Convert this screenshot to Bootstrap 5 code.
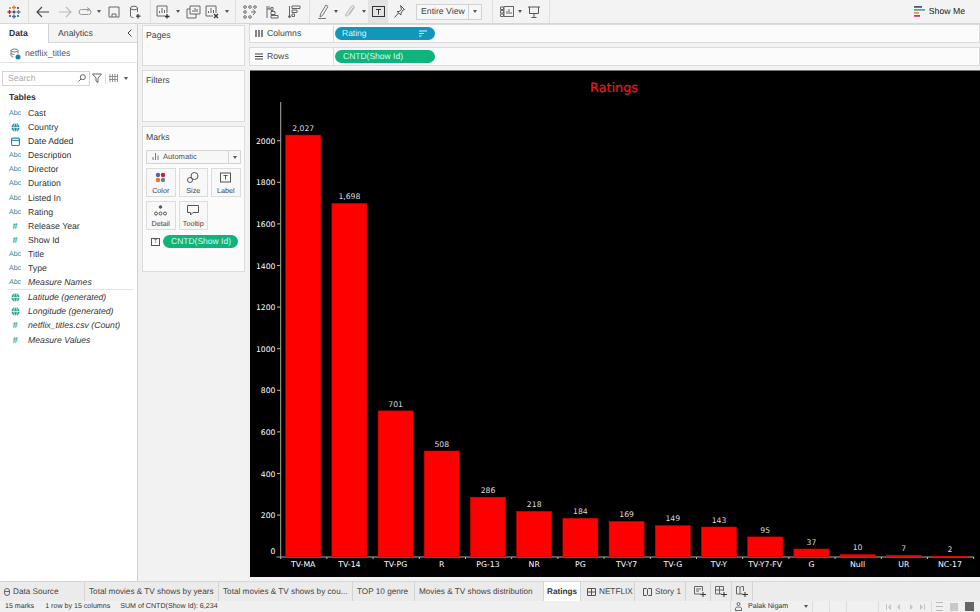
<!doctype html>
<html lang="en">
<head>
<meta charset="utf-8">
<title>Ratings</title>
<link rel="stylesheet" href="https://cdn.jsdelivr.net/npm/bootstrap@5.3.0/dist/css/bootstrap.min.css">
<style>
html,body{height:100%;margin:0;overflow:hidden}
body{font-family:"Liberation Sans",Arial,sans-serif;font-size:8.7px;color:#333;background:#f2f2f2;line-height:1.2;text-rendering:geometricPrecision}
svg{display:block}
.shell{width:980px;height:612px}
.tbar{height:24px;background:#f3f3f3;border-bottom:1px solid #d6d6d6;flex:none}
.tb{display:flex;align-items:center;justify-content:center;height:23px;flex:none}
.w4{width:4px}.w6{width:6px}.w10{width:10px}.w12{width:12px}.w18{width:18px}.w20{width:20px}.w22{width:22px}.w24{width:24px}.w28{width:28px}
.sep{width:1px;height:23px;background:#e0e0e0;flex:none}
.ml1px{margin-left:1px}.ml2{margin-left:2px}.ml3{margin-left:3px}.mr3{margin-right:3px}.ml4{margin-left:4px}.ml6{margin-left:6px}.ml10{margin-left:10px}
.caret{width:0;height:0;border-left:2.5px solid transparent;border-right:2.5px solid transparent;border-top:3px solid #555}
.tb-on{background:#e3e3e3}
.fitsel{width:66px;height:16px;background:#f7f7f7;border:1px solid #d2d2d2;font-size:8.7px;color:#444;flex:none}
.fitsel>.lbl{flex:1;padding-left:4px}
.fitsel>.caretbox{width:13px;border-left:1px solid #d2d2d2;height:100%}
.showme{font-size:8.7px;color:#222;margin-right:15px;gap:3px}
.mainrow{height:557px;flex:none}
.leftp{width:138px;background:#fff;border-right:1px solid #cfcfcf;flex:none}
.dtabs{height:19px}
.dtab-on{width:49px;padding-left:9px;font-weight:700;color:#333;line-height:19px;border-right:1px solid #d0d0d0}
.dtab-off{flex:1;background:#f4f4f4;border-bottom:1px solid #d8d8d8;line-height:19px;padding-left:9px;color:#444}
.arrowbox{margin-right:5px}
.srcrow{height:20px;padding:2px 0 0 10px;gap:4px;border-bottom:1px solid #e4e4e4;color:#555}
.searchrow{height:30px;padding-left:2px}
.searchbox{width:88px;height:15px;border:1px solid #d4d4d4;padding:0 3px 0 5px;color:#aaa}
.searchrow .sep{height:11px}
.tablehd{font-weight:700;padding-left:9px;height:13px;line-height:13px;margin-bottom:2px;margin-top:-2px}
.fieldrow{height:14.1px;line-height:14.1px;color:#333}
.fico{width:28px;flex:none;display:flex;justify-content:center;padding:1px 0 0 2px;color:#1f7f92;font-size:7px;font-weight:400}
.fico svg{margin-top:2px}
.fico-num{font-size:9px;font-weight:700;color:#2fa58f;padding-top:0}
.fdiv{height:1px;background:#e3e3e3;margin:0 4px 0 7px}
.midp{width:112px;padding:1px 5px 0 4px;flex:none;background:#f2f2f2}
.pane{background:#fbfbfb;border:1px solid #dcdcdc;border-radius:0;padding:4px 3px 0 3px;color:#444}
.pg{height:41px;margin-bottom:4px}
.fl{height:52px;margin-bottom:4px}
.mk{height:146px}
.mktitle{height:19px;line-height:12px}
.mksel{height:14px;width:95px;border:1px solid #d4d4d4;background:#f7f7f7;color:#555;font-size:7.6px;margin-bottom:4px}
.mksel>.txt{flex:1;padding-left:5px;display:flex;align-items:center;gap:4px}
.mksel>.cb{width:12px;border-left:1px solid #d4d4d4;height:100%}
.mkgrid{display:grid;grid-template-columns:29.500px 28.500px 29.500px;column-gap:3.500px;row-gap:4px}
.mkbtn{height:29px;border:1px solid #dcdcdc;background:#f8f8f8;font-size:7.2px;color:#444;padding-top:3px;gap:4px}
.pillrow{margin-top:5px;margin-right:3px;padding-left:5px;gap:3px}
.tbox{width:9px;height:8px;border:1px solid #555;font-size:5px;line-height:6px;text-align:center;color:#333}
.pillg{background:#0fb47c;color:#d4fbe9;border-radius:7px;height:13px;line-height:13px;font-size:8.5px;padding-left:8px}
.pillb{background:#1198b9;color:#d8f5ff;border-radius:7px;height:13px;line-height:13px;font-size:8.5px;padding-left:7px;width:100px}
.pillw{width:100px;margin-left:1px}
.rightp{width:731px;flex:none;padding-top:0}
.shelf{height:19px;background:#fbfbfb;border:1px solid #dcdcdc;border-radius:0;margin-left:-1px;margin-right:1px;margin-bottom:4px;color:#444}
.shelf-lab{width:84px;flex:none;padding-left:5px;gap:4px;border-right:1px solid #dcdcdc;height:100%}
.chartwrap{background:#000;height:507px;border-top:1px solid #777;width:730px}
.chartwrap text{font-family:"DejaVu Sans",Verdana,sans-serif}
.ttl{stroke:#e8191c;stroke-width:.2px}
.tabsbar{height:20px;background:#ececec;border-top:1px solid #d6d6d6;flex:none;font-size:8.2px;color:#444}
.stab{height:19px;border-right:1px solid #d4d4d4;padding-left:4px;white-space:nowrap;overflow:hidden;flex:none;background:#ebebeb;gap:3px}
.stab-on{background:#fff;font-weight:700;color:#333;justify-content:center;padding-left:0;margin-right:2px}
.w84{width:85px}.w134{width:134px}.w62{width:62px}.w129{width:129px}.w37{width:37px}.w52{width:52px}.w47{width:47px}.w21{width:21px}
.statusbar{height:11px;background:#f0f0f0;flex:none;font-size:7.1px;color:#333;overflow:hidden;line-height:11px}
.stat-txt{margin-left:5px}
.gap12{margin-left:11px}
.gap10{margin-left:10px}
.ubox{width:83px;height:11px;margin-left:1px;border-left:1px solid #ddd;border-right:1px solid #ddd;padding:0 4px;gap:6px}
.cell{height:11px;border-right:1px solid #ddd;flex:none}
.c18{width:17px}.c32{width:32px}.nav4{gap:7px;padding-left:7px;width:53px;color:#bbb}
</style>
</head>
<body>
<div class="shell d-flex flex-column">

<div class="tbar d-flex align-items-center">
 <div class="tb w28"><svg width="14" height="14" viewBox="0 0 14 14"><g stroke-width="1.3" fill="none"><path d="M7 0.5v4M5 2.500h4" stroke="#e8762b"/><path d="M7 9.500v4M5 11.500h4" stroke="#5b6591"/><path d="M2.500 5v4M.5 7h4" stroke="#c72035"/><path d="M11.500 5v4M9.500 7h4" stroke="#59879b"/><path d="M7 5.500v3M5.500 7h3" stroke="#1f447e"/><path d="M3 2v2M2 3h2" stroke="#eb912b"/><path d="M11 2v2M10 3h2" stroke="#c72035"/><path d="M3 10v2M2 11h2" stroke="#5c6692"/><path d="M11 10v2M10 11h2" stroke="#1f876e"/></g></svg></div>
 <div class="sep mr3"></div>
 <div class="tb w22"><svg width="14" height="12" viewBox="0 0 14 12" fill="none" stroke="#444" stroke-width="1.1"><path d="M13 6H1M6 1L1 6l5 5"/></svg></div>
 <div class="tb w22"><svg width="14" height="12" viewBox="0 0 14 12" fill="none" stroke="#bbb" stroke-width="1.1"><path d="M1 6h12M8 1l5 5-5 5"/></svg></div>
 <div class="tb w18"><svg width="15" height="9" viewBox="0 0 15 9" fill="none" stroke="#999" stroke-width="1"><rect x="1" y="2.500" width="12" height="5" rx="2.500"/><path d="M9 .5l3 2-3 1.500"/></svg></div>
 <div class="tb w10"><span class="caret"></span></div>
 <div class="tb w20"><svg width="12" height="12" viewBox="0 0 12 12" fill="none" stroke="#666"><path d="M1 1h10v10H1zM4 11V8h4v3"/></svg></div>
 <div class="tb w22"><svg width="12" height="14" viewBox="0 0 12 14" fill="none" stroke="#666"><ellipse cx="5" cy="3" rx="3.500" ry="1.800"/><path d="M1.500 3v8c0 1 1.500 1.500 3 1.500M8.500 3v4"/><path d="M9 9v4.500M7 11.200h4.500" stroke="#333" stroke-width="1.200"/></svg></div>
 <div class="sep ml4 mr3"></div>
 <div class="tb w18"><svg width="14" height="14" viewBox="0 0 14 14" fill="none" stroke="#666"><path d="M9 11H1V1h10v7"/><path d="M3.500 8V6M6 8V3M8.500 8V5"/><path d="M11 9v4.500M9 11.500h4.500" stroke="#333" stroke-width="1.300"/></svg></div>
 <div class="tb w12"><span class="caret"></span></div>
 <div class="tb w18"><svg width="15" height="14" viewBox="0 0 15 14" fill="none" stroke="#666"><path d="M4 9V1h10v8z"/><path d="M4 4H1v9h9v-4"/><path d="M7 7V5M9 7V3M11 7V4" stroke="#666"/></svg></div>
 <div class="tb w20"><svg width="14" height="14" viewBox="0 0 14 14" fill="none" stroke="#666"><path d="M8 11H1V1h10v7"/><path d="M3.500 8V6M6 8V3M8.500 8V5"/><path d="M9 9l4 4M13 9l-4 4" stroke="#333" stroke-width="1.300"/></svg></div>
 <div class="tb w10"><span class="caret"></span></div>
 <div class="sep ml3 mr3"></div>
 <div class="tb w22"><svg width="14" height="14" viewBox="0 0 14 14" fill="none" stroke="#666"><circle cx="2" cy="2" r="1.300"/><circle cx="7" cy="2" r="1.300"/><circle cx="12" cy="2" r="1.300"/><circle cx="2" cy="7" r="1.300"/><circle cx="2" cy="12" r="1.300"/><circle cx="7" cy="12" r="1.300"/><path d="M10 4.500l2.500 2.500-2.500 3M12 7H8"/></svg></div>
 <div class="tb w22"><svg width="13" height="14" viewBox="0 0 13 14" fill="none" stroke="#666"><path d="M1 1v12M1 4h4M3 1v3M5 6.500h4v3H5zM5 10.500h7v2.500H5zM5 2.500h2v3H5z"/></svg></div>
 <div class="tb w22"><svg width="13" height="14" viewBox="0 0 13 14" fill="none" stroke="#666"><path d="M4 1h8v2.500H4zM4 5h5v2.500H4zM4 9h2.500v2.500H4zM1.500 1v12M0 10.500l1.500 2.500 1.500-2.500"/></svg></div>
 <div class="sep ml4 mr3"></div>
 <div class="tb w20"><svg width="11" height="15" viewBox="0 0 11 15" fill="none" stroke="#777"><path d="M8 1L2.500 10l-.5 3 2.500-1.500L10 2.500z"/><path d="M0 14.500h8" stroke="#777"/></svg></div>
 <div class="tb w6"><span class="caret"></span></div>
 <div class="tb w22"><svg width="10" height="15" viewBox="0 0 10 15" fill="none" stroke="#bbb" stroke-width="1.100"><path d="M8.500 3.500L3 11c-1.500 2-3 .5-2-1l5.500-7.500c1-1.500 3.500-.5 2.500 1.500L4 11"/></svg></div>
 <div class="tb w6"><span class="caret"></span></div>
 <div class="tb w20 tb-on ml1px"><svg width="13" height="11" viewBox="0 0 13 11" fill="none" stroke="#333"><rect x=".5" y=".5" width="12" height="10"/><path d="M4 3.500h5M6.500 3.500v5"/></svg></div>
 <div class="tb w22"><svg width="11" height="13" viewBox="0 0 11 13" fill="none" stroke="#555"><path d="M6.500 .5l4 4-1.500.5-2 3 0 2L3 6.500h2l2.500-2zM4.500 8L.5 12.500"/></svg></div>
 <div class="fitsel d-flex align-items-center ml6"><span class="lbl">Entire View</span><span class="caretbox d-flex align-items-center justify-content-center"><span class="caret"></span></span></div>
 <div class="sep ml10 mr3"></div>
 <div class="tb w22"><svg width="14" height="11" viewBox="0 0 14 11" fill="none" stroke="#666"><rect x="4" y=".5" width="9.500" height="10"/><path d="M7 8V5M9 8V3M11 8V6M.5 1h3v2.500h-3zM.5 4.500h3V7h-3zM.5 8h3v2.500h-3z"/></svg></div>
 <div class="tb w4"><span class="caret"></span></div>
 <div class="tb w24"><svg width="12" height="12" viewBox="0 0 12 12" fill="none" stroke="#555"><path d="M0 1h12M1.500 1v6.500h9V1M6 7.500v4M3.500 11.500h5"/></svg></div>
 <div class="sep ml3"></div>
 <div class="ms-auto d-flex align-items-center showme"><svg width="12" height="11" viewBox="0 0 12 11"><rect y="0" width="8" height="1.800" fill="#4e5688"/><rect y="3" width="11" height="1.800" fill="#5aa2c8"/><rect y="6" width="5" height="1.800" fill="#e8963c"/><rect y="9" width="6" height="1.800" fill="#d8335a"/></svg><span>Show Me</span></div>
</div>

<div class="mainrow d-flex">
 <div class="leftp d-flex flex-column">
  <div class="dtabs d-flex"><div class="dtab-on">Data</div><div class="dtab-off d-flex justify-content-between">Analytics<span class="arrowbox d-flex align-items-center"><svg width="5" height="8" viewBox="0 0 5 8" fill="none" stroke="#444"><path d="M4.500 .5L1 4l3.500 3.500"/></svg></span></div></div>
  <div class="srcrow d-flex align-items-center"><svg width="11" height="12" viewBox="0 0 11 12" fill="none" stroke="#777"><ellipse cx="4.500" cy="2.500" rx="3.500" ry="1.500"/><path d="M1 2.500v5c0 1 1.500 1.500 2.500 1.500M8 2.500v3M1 5c0 1 2 1.500 3.500 1.500"/><circle cx="8" cy="9" r="2.500" fill="#1a7fa8" stroke="none"/></svg><span>netflix_titles</span></div>
  <div class="searchrow d-flex align-items-center">
   <div class="searchbox d-flex align-items-center justify-content-between"><span>Search</span><svg width="8" height="8" viewBox="0 0 8 8" fill="none" stroke="#666"><circle cx="4.800" cy="3.200" r="2.500"/><path d="M3 5L.5 7.500"/></svg></div>
   <svg class="ml2" width="10" height="10" viewBox="0 0 10 10" fill="none" stroke="#666"><path d="M.5 1h9L6 5v4.500L4 8V5z"/></svg>
   <span class="ml3 sep" aria-hidden="true"></span>
   <svg class="ml3" width="9" height="8" viewBox="0 0 9 8" fill="none" stroke="#888"><path d="M1 0v8M3.500 0v8M6 0v8M8.500 0v8M0 2.500h9M0 5.500h9" stroke-width=".9"/></svg>
   <span class="caret ml6"></span>
  </div>
  <div class="tablehd">Tables</div>
  <div class="fieldrow d-flex"><span class="fico">Abc</span>Cast</div>
  <div class="fieldrow d-flex"><span class="fico"><svg width="9" height="9" viewBox="0 0 8 8" fill="#2a8fa5" stroke="#fff" stroke-width=".6"><circle cx="4" cy="4" r="3.900"/><path d="M0 4h8M4 0c-2 2-2 6 0 8M4 0c2 2 2 6 0 8" fill="none"/></svg></span>Country</div>
  <div class="fieldrow d-flex"><span class="fico"><svg width="9" height="9" viewBox="0 0 8 8" fill="none" stroke="#2a8a9a"><rect x=".5" y="1" width="7" height="6.500" rx="1"/><path d="M.5 3h7"/></svg></span>Date Added</div>
  <div class="fieldrow d-flex"><span class="fico">Abc</span>Description</div>
  <div class="fieldrow d-flex"><span class="fico">Abc</span>Director</div>
  <div class="fieldrow d-flex"><span class="fico">Abc</span>Duration</div>
  <div class="fieldrow d-flex"><span class="fico">Abc</span>Listed In</div>
  <div class="fieldrow d-flex"><span class="fico">Abc</span>Rating</div>
  <div class="fieldrow d-flex"><span class="fico fico-num">#</span>Release Year</div>
  <div class="fieldrow d-flex"><span class="fico fico-num">#</span>Show Id</div>
  <div class="fieldrow d-flex"><span class="fico">Abc</span>Title</div>
  <div class="fieldrow d-flex"><span class="fico">Abc</span>Type</div>
  <div class="fieldrow d-flex fst-italic"><span class="fico">Abc</span>Measure Names</div>
  <div class="fdiv"></div>
  <div class="fieldrow d-flex fst-italic"><span class="fico"><svg width="9" height="9" viewBox="0 0 8 8" fill="#2fa58f" stroke="#fff" stroke-width=".6"><circle cx="4" cy="4" r="3.900"/><path d="M0 4h8M4 0c-2 2-2 6 0 8M4 0c2 2 2 6 0 8" fill="none"/></svg></span>Latitude (generated)</div>
  <div class="fieldrow d-flex fst-italic"><span class="fico"><svg width="9" height="9" viewBox="0 0 8 8" fill="#2fa58f" stroke="#fff" stroke-width=".6"><circle cx="4" cy="4" r="3.900"/><path d="M0 4h8M4 0c-2 2-2 6 0 8M4 0c2 2 2 6 0 8" fill="none"/></svg></span>Longitude (generated)</div>
  <div class="fieldrow d-flex fst-italic"><span class="fico fico-num">#</span>netflix_titles.csv (Count)</div>
  <div class="fieldrow d-flex fst-italic"><span class="fico fico-num">#</span>Measure Values</div>
 </div>

 <div class="midp d-flex flex-column">
  <div class="card pane pg">Pages</div>
  <div class="card pane fl">Filters</div>
  <div class="card pane mk">
   <div class="mktitle">Marks</div>
   <div class="mksel d-flex align-items-center"><span class="txt"><svg width="7" height="7" viewBox="0 0 7 7" stroke="#777" fill="none"><path d="M1 7V4M3.500 7V0M6 7V2.500"/></svg>Automatic</span><span class="cb d-flex align-items-center justify-content-center"><span class="caret"></span></span></div>
   <div class="mkgrid">
    <div class="mkbtn d-flex flex-column align-items-center"><svg width="11" height="11" viewBox="0 0 11 11"><circle cx="3" cy="3" r="2.200" fill="#5c6692"/><circle cx="8" cy="3" r="2.200" fill="#c72035"/><circle cx="3" cy="8" r="2.200" fill="#e8762b"/><circle cx="8" cy="8" r="2.200" fill="#59879b"/></svg><span>Color</span></div>
    <div class="mkbtn d-flex flex-column align-items-center"><svg width="12" height="11" viewBox="0 0 12 11" fill="none" stroke="#555"><circle cx="7.500" cy="4" r="3.500"/><circle cx="3" cy="8" r="2.500"/></svg><span>Size</span></div>
    <div class="mkbtn d-flex flex-column align-items-center"><svg width="11" height="11" viewBox="0 0 11 10" fill="none" stroke="#555"><rect x=".5" y=".5" width="10" height="9"/><path d="M3.500 3h4M5.500 3v4"/></svg><span>Label</span></div>
    <div class="mkbtn d-flex flex-column align-items-center"><svg width="13" height="11" viewBox="0 0 13 11" fill="none" stroke="#555"><circle cx="6.500" cy="2" r="1.300" fill="#555"/><circle cx="2" cy="8.500" r="1.500"/><circle cx="6.500" cy="8.500" r="1.500"/><circle cx="11" cy="8.500" r="1.500"/></svg><span>Detail</span></div>
    <div class="mkbtn d-flex flex-column align-items-center"><svg width="12" height="11" viewBox="0 0 12 11" fill="none" stroke="#555"><path d="M.5 .5h11v7H6l-2.500 2.500V7.500h-3z"/></svg><span>Tooltip</span></div>
   </div>
   <div class="pillrow d-flex align-items-center"><span class="tbox">T</span><span class="pillg flex-grow-1">CNTD(Show Id)</span></div>
  </div>
 </div>

 <div class="rightp d-flex flex-column">
  <div class="card shelf flex-row align-items-center"><div class="shelf-lab d-flex align-items-center"><svg width="8" height="7" viewBox="0 0 8 7" stroke="#444" stroke-width="1.300"><path d="M1 0v7M4 0v7M7 0v7"/></svg><span>Columns</span></div><div class="pillb pillw d-flex align-items-center justify-content-between"><span>Rating</span><svg class="me-2" width="8" height="7" viewBox="0 0 8 7" stroke="#eef" stroke-width="1.100"><path d="M0 1h8M0 3.500h5M0 6h2.500"/></svg></div></div>
  <div class="card shelf flex-row align-items-center"><div class="shelf-lab d-flex align-items-center"><svg width="8" height="7" viewBox="0 0 8 7" stroke="#444" stroke-width="1.100"><path d="M0 1h8M0 3.500h8M0 6h8"/></svg><span>Rows</span></div><div class="pillg pillw">CNTD(Show Id)</div></div>
  <div class="chartwrap">
   <svg width="730" height="506" viewBox="250 71 730 506" role="img" aria-label="Ratings bar chart">
    <text class="ttl" x="614" y="92" text-anchor="middle" font-size="12.800" fill="#e8191c">Ratings</text>
    <path d="M280.700 102V557M276.500 557H974" stroke="#aaa" fill="none"/>
    <path d="M277 140.700h3.500M277 182.300h3.500M277 223.900h3.500M277 265.500h3.500M277 307.100h3.500M277 348.700h3.500M277 390.300h3.500M277 431.900h3.500M277 473.500h3.500M277 515.100h3.500M326.900 557v2M373.100 557v2M419.300 557v2M465.500 557v2M511.700 557v2M557.900 557v2M604.100 557v2M650.300 557v2M696.500 557v2M742.700 557v2M788.900 557v2M835.100 557v2M881.300 557v2M927.500 557v2M973.700 557v2M280.700 557v2" stroke="#bbb" fill="none"/>
    <g font-size="7.700" fill="#fff" text-anchor="end">
     <text x="275.500" y="143.700">2000</text><text x="275.500" y="185.300">1800</text><text x="275.500" y="226.900">1600</text><text x="275.500" y="268.500">1400</text><text x="275.500" y="310.100">1200</text><text x="275.500" y="351.700">1000</text><text x="275.500" y="393.300">800</text><text x="275.500" y="434.900">600</text><text x="275.500" y="476.500">400</text><text x="275.500" y="518.100">200</text><text x="275.500" y="554">0</text>
    </g>
    <g fill="#ff0000" stroke="#e00000" stroke-width=".5">
     <rect x="285.700" y="135.100" width="35" height="421.600"/><rect x="331.900" y="203.500" width="35" height="353.200"/><rect x="378.100" y="410.900" width="35" height="145.800"/><rect x="424.300" y="451" width="35" height="105.700"/><rect x="470.500" y="497.200" width="35" height="59.500"/><rect x="516.700" y="511.400" width="35" height="45.300"/><rect x="562.900" y="518.400" width="35" height="38.300"/><rect x="609.100" y="521.500" width="35" height="35.200"/><rect x="655.300" y="525.700" width="35" height="31"/><rect x="701.500" y="527" width="35" height="29.700"/><rect x="747.700" y="536.900" width="35" height="19.800"/><rect x="793.900" y="549" width="35" height="7.700"/><rect x="840.100" y="554.600" width="35" height="2.100"/><rect x="886.300" y="555.200" width="35" height="1.500"/><rect x="932.500" y="556.300" width="35" height=".5"/>
    </g>
    <g font-size="7.700" fill="#dcdcdc" text-anchor="middle">
     <text x="303.200" y="131">2,027</text><text x="349.400" y="199">1,698</text><text x="395.600" y="406.500">701</text><text x="441.800" y="446.500">508</text><text x="488" y="492.700">286</text><text x="534.200" y="507">218</text><text x="580.400" y="514">184</text><text x="626.600" y="517">169</text><text x="672.800" y="521.300">149</text><text x="719" y="522.500">143</text><text x="765.200" y="532.500">95</text><text x="811.400" y="544.500">37</text><text x="857.600" y="550">10</text><text x="903.800" y="550.700">7</text><text x="950" y="551.800">2</text>
    </g>
    <g font-size="7.800" fill="#fff" text-anchor="middle">
     <text x="303.200" y="567">TV-MA</text><text x="349.400" y="567">TV-14</text><text x="395.600" y="567">TV-PG</text><text x="441.800" y="567">R</text><text x="488" y="567">PG-13</text><text x="534.200" y="567">NR</text><text x="580.400" y="567">PG</text><text x="626.600" y="567">TV-Y7</text><text x="672.800" y="567">TV-G</text><text x="719" y="567">TV-Y</text><text x="765.200" y="567">TV-Y7-FV</text><text x="811.400" y="567">G</text><text x="857.600" y="567">Null</text><text x="903.800" y="567">UR</text><text x="950" y="567">NC-17</text>
    </g>
   </svg>
  </div>
 </div>
</div>

<div class="tabsbar d-flex">
 <div class="stab w84 d-flex align-items-center"><svg width="6" height="8" viewBox="0 0 6 8" fill="none" stroke="#666"><rect x=".5" y=".5" width="5" height="7" rx="2.500"/><path d="M.5 3.500h5"/></svg><span>Data Source</span></div>
 <div class="stab w134 d-flex align-items-center">Total movies &amp; TV shows by years</div>
 <div class="stab w134 d-flex align-items-center">Total movies &amp; TV shows by cou...</div>
 <div class="stab w62 d-flex align-items-center">TOP 10 genre</div>
 <div class="stab w129 d-flex align-items-center">Movies &amp; TV shows distribution</div>
 <div class="stab stab-on w37 d-flex align-items-center">Ratings</div>
 <div class="stab w52 d-flex align-items-center"><svg width="9" height="8" viewBox="0 0 9 8" fill="none" stroke="#555"><path d="M.5 .5h8v7h-8zM.5 4h8M4.500 .5v7"/></svg><span>NETFLIX</span></div>
 <div class="stab w47 ms-1 d-flex align-items-center"><svg width="9" height="8" viewBox="0 0 9 8" fill="none" stroke="#555"><path d="M.5 .5h3l1 1 1-1h3v7h-3l-1-1-1 1h-3zM4.500 1.500v5"/></svg><span>Story 1</span></div>
 <div class="stab w21 ms-1 d-flex align-items-center"><svg width="12" height="11" viewBox="0 0 12 11" fill="none" stroke="#666"><path d="M7 8H.5V.5h8V5M2 3h5M2 5h3"/><path d="M9 6v5M6.500 8.500H12" stroke="#333"/></svg></div>
 <div class="stab w21 d-flex align-items-center"><svg width="12" height="11" viewBox="0 0 12 11" fill="none" stroke="#666"><path d="M7 8H.5V.5h8V5M.5 4h8M4.500 .5V8"/><path d="M9 6v5M6.500 8.500H12" stroke="#333"/></svg></div>
 <div class="stab w21 d-flex align-items-center"><svg width="12" height="11" viewBox="0 0 12 11" fill="none" stroke="#666"><path d="M7 8H.5V.5h2l1.500 1 1.500-1h2V5M4 1.500V8"/><path d="M9 6v5M6.500 8.500H12" stroke="#333"/></svg></div>
</div>

<div class="statusbar d-flex align-items-center">
 <span class="stat-txt">15 marks</span><span class="gap12">1 row by 15 columns</span><span class="gap10">SUM of CNTD(Show Id): 6,234</span>
 <div class="ubox d-flex align-items-center ms-auto"><svg width="7" height="9" viewBox="0 0 7 9" fill="none" stroke="#666"><circle cx="3.500" cy="2" r="1.500"/><path d="M.5 8.500V6.500c0-1 1-1.500 3-1.500s3 .5 3 1.500v2z"/></svg><span class="flex-grow-1">Palak Nigam</span><span class="caret"></span></div>
 <div class="cell c18"></div><div class="cell c18"></div><div class="cell c32"></div>
 <div class="nav4 d-flex align-items-center justify-content-start cell"><svg width="40" height="6" viewBox="0 0 40 6" fill="#c4c4c4"><path d="M0 0h1v6H0zM5 0v6L2 3zM14 0v6l-3-3zM24 0v6l3-3zM34 0v6l3-3zM38 0h1v6h-1z"/></svg></div>
 <svg class="ms-1 me-1" width="40" height="9" viewBox="0 0 40 9"><g fill="#bbb"><path d="M0 0h7v1H0zM0 4h7v1H0zM0 8h7v1H0z"/></g><rect x="14" y="1" width="8" height="8" fill="#c8c8c8"/><rect x="29" y="0" width="9" height="9" fill="#666"/></svg>
</div>

</div>
</body>
</html>
